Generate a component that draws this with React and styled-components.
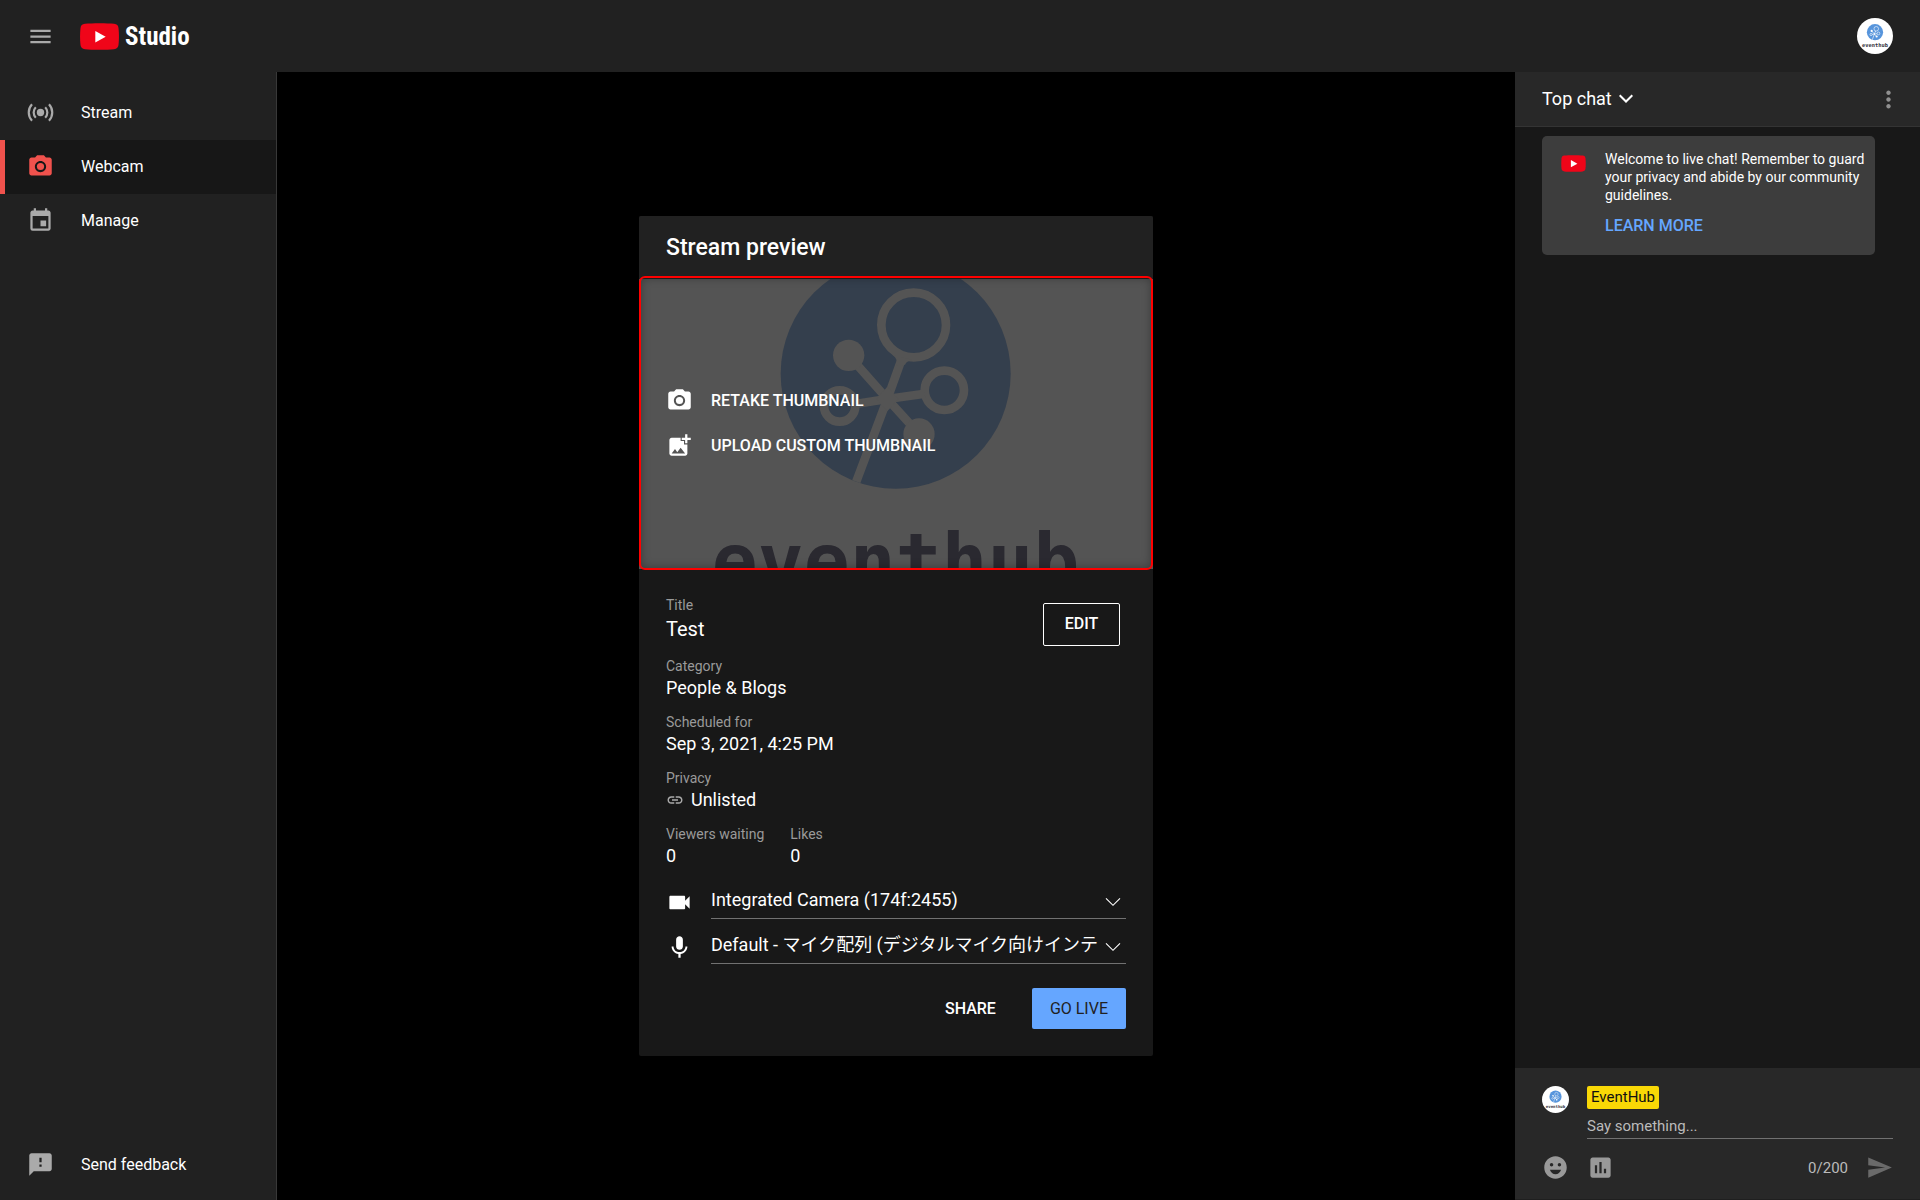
import React from "react";
import styled, { createGlobalStyle } from "styled-components";
import {
  MdMenu,
  MdPhotoCamera,
  MdEvent,
  MdFeedback,
  MdAddPhotoAlternate,
  MdVideocam,
  MdMic,
  MdLink,
  MdMoreVert,
  MdSend,
  MdEmojiEmotions,
  MdPoll,
} from "react-icons/md";

const GlobalStyle = createGlobalStyle`
  *, *::before, *::after { box-sizing: border-box; }
  body {
    margin: 0;
    background: #000;
    color: #fff;
    font-family: Roboto, "Noto Sans CJK JP", sans-serif;
    font-size: 16px;
  }
  button, input, select { font: inherit; color: inherit; }
  button { background: none; border: 0; padding: 0; cursor: pointer; }
  svg { display: block; flex: none; }
  p, h1, h2, dl, dt, dd, ul { margin: 0; padding: 0; }
`;

const Page = styled.div`
  display: flex;
  flex-direction: column;
  min-height: 100vh;
`;

const TopBar = styled.header`
  display: flex;
  align-items: center;
  height: 72px;
  padding: 0 27px;
  background: #212121;
`;

const IconButton = styled.button`
  display: flex;
  align-items: center;
  justify-content: center;
  width: 27px;
  height: 27px;
  color: ${(p) => p.$color || "#aaa"};
`;

const Brand = styled.a`
  display: flex;
  align-items: center;
  gap: 6px;
  margin-left: 26px;
  margin-right: auto;
  color: #fff;
  text-decoration: none;
`;

const BrandName = styled.span`
  padding-top: 2px;
  font-family: "Liberation Sans Narrow", "Roboto Condensed", Roboto, sans-serif;
  font-size: 25px;
  font-weight: 700;
  line-height: 28px;
`;

const AvatarFrame = styled.span`
  display: block;
  flex: none;
  width: ${(p) => p.$size}px;
  height: ${(p) => p.$size}px;
  border-radius: 50%;
  overflow: hidden;
  background: #fff;
`;

const Body = styled.div`
  display: flex;
  flex: 1;
`;

const Sidebar = styled.nav`
  display: flex;
  flex-direction: column;
  justify-content: space-between;
  flex: none;
  width: 277px;
  padding: 14px 0 8px;
  background: #212121;
  border-right: 1px solid #383838;
`;

const NavList = styled.ul`
  list-style: none;
`;

const NavLink = styled.a`
  display: flex;
  align-items: center;
  gap: 27px;
  height: 54px;
  padding: 0 0 2px 22px;
  border-left: 5px solid ${(p) => (p.$active ? "#f0524d" : "transparent")};
  background: ${(p) => (p.$active ? "#171717" : "transparent")};
  color: #fff;
  text-decoration: none;

  svg {
    color: ${(p) => (p.$active ? "#f0524d" : "#aaa")};
  }
`;

const Stage = styled.main`
  display: flex;
  flex: 1;
  align-items: center;
  justify-content: center;
  background: #000;
`;

const Card = styled.section`
  width: 514px;
  border-radius: 2px;
  overflow: hidden;
  background: #181818;
`;

const CardTitle = styled.h1`
  height: 63px;
  padding: 0 27px;
  background: #212121;
  font-size: 23px;
  font-weight: 500;
  line-height: 64px;
`;

const Thumbnail = styled.div`
  position: relative;
  display: flex;
  flex-direction: column;
  justify-content: center;
  height: 290px;
  padding-bottom: 2px;
  background: #545454;
`;

const ThumbnailArt = styled.svg`
  position: absolute;
  inset: 0;
  width: 100%;
  height: 100%;
`;

const Highlight = styled.div`
  position: absolute;
  inset: -3px 0 -1px;
  border: 2px solid #f00;
  border-radius: 6px;
  box-shadow: inset 0 0 10px rgba(0, 0, 0, 0.3);
  pointer-events: none;
`;

const ThumbnailAction = styled.button`
  position: relative;
  display: flex;
  align-items: center;
  gap: 18px;
  height: 45px;
  padding: 0 27px;
  font-weight: 500;
`;

const Details = styled.div`
  padding: 27px;
`;

const Summary = styled.div`
  display: flex;
  justify-content: space-between;
  align-items: flex-start;
`;

const Fields = styled.dl`
  display: flex;
  flex-direction: column;
  gap: 13px;
`;

const Stats = styled.div`
  display: flex;
  gap: 26px;
`;

const Label = styled.dt`
  color: #9a9a9a;
  font-size: 14px;
  line-height: 18px;
`;

const Value = styled.dd`
  display: flex;
  align-items: center;
  gap: 7px;
  font-size: ${(p) => (p.$large ? 20 : 18)}px;
  line-height: ${(p) => (p.$large ? 30 : 25)}px;

  svg {
    color: #aaa;
  }
`;

const EditButton = styled.button`
  width: 77px;
  height: 43px;
  margin: 7px 6px 0 0;
  padding-bottom: 2px;
  border: 1px solid #fff;
  border-radius: 2px;
  font-weight: 500;
`;

const Devices = styled.div`
  display: flex;
  flex-direction: column;
  gap: 8px;
  margin-top: 14px;
`;

const DeviceRow = styled.label`
  display: flex;
  align-items: center;
  gap: 18px;
  height: 37px;

  > svg {
    margin-top: 4px;
  }
`;

const SelectBox = styled.span`
  position: relative;
  flex: 1;
  min-width: 0;
  border-bottom: 1px solid #717171;

  svg {
    position: absolute;
    right: 5px;
    top: 15px;
    pointer-events: none;
  }
`;

const DeviceSelect = styled.select`
  display: block;
  appearance: none;
  width: 100%;
  height: 36px;
  padding: 0 22px 0 0;
  border: 0;
  background: transparent;
  font-size: 18px;
  line-height: 36px;
`;

const Actions = styled.div`
  display: flex;
  justify-content: flex-end;
  gap: 18px;
  margin-top: 24px;
`;

const ActionButton = styled.button`
  height: 41px;
  padding: 0 18px;
  border-radius: 2px;
  background: ${(p) => (p.$primary ? "#65a6ff" : "transparent")};
  color: ${(p) => (p.$primary ? "#212121" : "#fff")};
  font-weight: ${(p) => (p.$primary ? 400 : 500)};
`;

const Chat = styled.aside`
  display: flex;
  flex-direction: column;
  flex: none;
  width: 405px;
  background: #181818;
`;

const ChatHeader = styled.div`
  display: flex;
  align-items: center;
  justify-content: space-between;
  height: 55px;
  padding: 0 18px 0 27px;
  background: #282828;
  border-bottom: 1px solid #343434;
`;

const ChatMode = styled.button`
  display: flex;
  align-items: center;
  gap: 7px;
  padding-bottom: 2px;
  font-size: 18px;
`;

const Notice = styled.div`
  display: flex;
  align-items: flex-start;
  gap: 19px;
  margin: 9px 45px auto 27px;
  padding: 14px 9px 17px 19px;
  border-radius: 5px;
  background: #3d3d3d;
  font-size: 14px;
  line-height: 18px;

  > svg {
    margin-top: 5px;
  }
`;

const NoticeLink = styled.a`
  display: block;
  margin-top: 10px;
  color: #65a6ff;
  font-size: 16px;
  font-weight: 500;
  line-height: 24px;
  text-decoration: none;
`;

const Composer = styled.form`
  padding: 18px 27px;
  background: #282828;
  border-bottom: 1px solid #1f1f1f;
`;

const ComposerTop = styled.div`
  display: flex;
  align-items: flex-start;
  gap: 18px;
`;

const ComposerField = styled.div`
  flex: 1;
  min-width: 0;
`;

const Author = styled.label`
  display: block;
  width: fit-content;
  padding: 0 4px;
  border-radius: 2px;
  background: #f9d806;
  color: #111;
  font-size: 15px;
  line-height: 23px;
`;

const MessageInput = styled.input`
  display: block;
  width: 100%;
  height: 22px;
  margin-top: 8px;
  padding: 0 0 3px;
  border: 0;
  border-bottom: 1px solid #717171;
  outline: 0;
  background: transparent;
  font-size: 15px;
  line-height: 18px;

  &::placeholder {
    color: #bbb;
    opacity: 1;
  }
`;

const ComposerTools = styled.div`
  display: flex;
  align-items: center;
  gap: 18px;
  margin-top: 15px;
`;

const Counter = styled.span`
  margin-left: auto;
  color: #bbb;
  font-size: 15px;
`;

const PlayBadge = ({ width, height }) => (
  <svg width={width} height={height} viewBox="0 0 39 27" aria-hidden="true">
    <path
      d="M5 .8C12 0 27 0 34 .8 37 1.200 38.200 2.600 38.500 5c.6 5 .6 12 0 17-.3 2.400-1.500 3.800-4.500 4.200-7 .8-22 .8-29 0C2 25.800.8 24.400.5 22c-.6-5-.6-12 0-17C.8 2.600 2 1.200 5 .8z"
      fill="#f00519"
    />
    <path d="M15.300 8v11.400l10.400-5.700z" fill="#fff" />
  </svg>
);

const Chevron = ({ width, height, stroke }) => (
  <svg width={width} height={height} viewBox="0 0 14 9" fill="none" aria-hidden="true">
    <path d="M.7 1.200 7 7.500l6.300-6.300" stroke="#fff" strokeWidth={stroke} />
  </svg>
);

const StreamIcon = () => (
  <svg width="27" height="27" viewBox="0 0 27 27" fill="none" aria-hidden="true">
    <circle cx="13.500" cy="13.500" r="3.700" fill="currentColor" />
    <g stroke="currentColor" strokeWidth="2.200">
      <path d="M8.800 8.300a7.400 7.400 0 0 0 0 10.400" />
      <path d="M18.200 8.300a7.400 7.400 0 0 1 0 10.400" />
      <path d="M5 5.300a12 12 0 0 0 0 16.400" />
      <path d="M22 5.300a12 12 0 0 1 0 16.400" />
    </g>
  </svg>
);

/* Company mark: circular network emblem above the lowercase word. */
const EventMark = ({ blue, line, ink }) => (
  <>
    <clipPath id="emblem">
      <circle cx="798" cy="491" r="345" />
    </clipPath>
    <circle cx="798" cy="491" r="345" fill={blue} />
    <g clipPath="url(#emblem)" fill="none" stroke={line} strokeWidth="26">
      <circle cx="852" cy="345" r="97" />
      <circle cx="944" cy="541" r="59" />
      <circle cx="630" cy="588" r="47" />
      <path d="M817 445 773 567 674 830" />
      <path d="M885 551 773 567 677 582" />
      <path d="M657 436 773 567 862 665" />
      <circle cx="657" cy="436" r="47" fill={line} stroke="none" />
      <circle cx="868" cy="672" r="47" fill={line} stroke="none" />
      <path d="M773 530 806 567 773 604 740 567z" fill={line} stroke="none" />
      <path d="M788 434Q806 446 800 468L826 464Q832 452 848 450z" fill={line} stroke="none" />
    </g>
    <text
      x="798"
      y="1134"
      fill={ink}
      fontFamily="DejaVu Sans Mono, monospace"
      fontSize="229"
      fontWeight="700"
      textAnchor="middle"
    >
      eventhub
    </text>
  </>
);

const Avatar = ({ size }) => (
  <AvatarFrame $size={size}>
    <svg width={size} height={size} viewBox="33 -114 1530 1530" role="img" aria-label="EventHub">
      <EventMark blue="#5795dc" line="#fff" ink="#33333d" />
    </svg>
  </AvatarFrame>
);

const navItems = [
  { label: "Stream", icon: <StreamIcon /> },
  { label: "Webcam", icon: <MdPhotoCamera size={27} />, active: true },
  { label: "Manage", icon: <MdEvent size={27} /> },
];

const devices = [
  { id: "camera", icon: <MdVideocam size={27} />, name: "Integrated Camera (174f:2455)" },
  { id: "microphone", icon: <MdMic size={27} />, name: "Default - マイク配列 (デジタルマイク向けインテ" },
];

const Field = ({ label, large, children }) => (
  <div>
    <Label>{label}</Label>
    <Value $large={large}>{children}</Value>
  </div>
);

export default function App() {
  return (
    <Page>
      <GlobalStyle />
      <TopBar>
        <IconButton aria-label="Menu">
          <MdMenu size={27} />
        </IconButton>
        <Brand href="#">
          <PlayBadge width={39} height={27} />
          <BrandName>Studio</BrandName>
        </Brand>
        <Avatar size={36} />
      </TopBar>

      <Body>
        <Sidebar>
          <NavList>
            {navItems.map((item) => (
              <li key={item.label}>
                <NavLink href="#" $active={item.active}>
                  {item.icon}
                  {item.label}
                </NavLink>
              </li>
            ))}
          </NavList>
          <NavLink href="#">
            <MdFeedback size={27} />
            Send feedback
          </NavLink>
        </Sidebar>

        <Stage>
          <Card>
            <CardTitle>Stream preview</CardTitle>
            <Thumbnail>
              <ThumbnailArt viewBox="28 207 1542 870" aria-hidden="true">
                <EventMark blue="#343f4d" line="#545454" ink="#2a2930" />
              </ThumbnailArt>
              <Highlight />
              <ThumbnailAction>
                <MdPhotoCamera size={27} />
                RETAKE THUMBNAIL
              </ThumbnailAction>
              <ThumbnailAction>
                <MdAddPhotoAlternate size={27} />
                UPLOAD CUSTOM THUMBNAIL
              </ThumbnailAction>
            </Thumbnail>

            <Details>
              <Summary>
                <Fields>
                  <Field label="Title" large>
                    Test
                  </Field>
                  <Field label="Category">People &amp; Blogs</Field>
                  <Field label="Scheduled for">Sep 3, 2021, 4:25 PM</Field>
                  <Field label="Privacy">
                    <MdLink size={18} />
                    Unlisted
                  </Field>
                  <Stats>
                    <Field label="Viewers waiting">0</Field>
                    <Field label="Likes">0</Field>
                  </Stats>
                </Fields>
                <EditButton>EDIT</EditButton>
              </Summary>

              <Devices>
                {devices.map((device) => (
                  <DeviceRow key={device.id} htmlFor={device.id}>
                    {device.icon}
                    <SelectBox>
                      <DeviceSelect id={device.id} aria-label={device.id}>
                        <option>{device.name}</option>
                      </DeviceSelect>
                      <Chevron width={16} height={10} stroke={1} />
                    </SelectBox>
                  </DeviceRow>
                ))}
              </Devices>

              <Actions>
                <ActionButton>SHARE</ActionButton>
                <ActionButton $primary>GO LIVE</ActionButton>
              </Actions>
            </Details>
          </Card>
        </Stage>

        <Chat>
          <ChatHeader>
            <ChatMode>
              Top chat
              <Chevron width={14} height={9} stroke={2} />
            </ChatMode>
            <IconButton aria-label="More options" $color="#909090">
              <MdMoreVert size={27} />
            </IconButton>
          </ChatHeader>

          <Notice>
            <PlayBadge width={25} height={17} />
            <div>
              <p>
                Welcome to live chat! Remember to guard your privacy and abide by our community
                guidelines.
              </p>
              <NoticeLink href="#">LEARN MORE</NoticeLink>
            </div>
          </Notice>

          <Composer>
            <ComposerTop>
              <Avatar size={27} />
              <ComposerField>
                <Author htmlFor="message">EventHub</Author>
                <MessageInput id="message" type="text" placeholder="Say something..." />
              </ComposerField>
            </ComposerTop>
            <ComposerTools>
              <IconButton type="button" aria-label="Emoji" $color="#999">
                <MdEmojiEmotions size={27} />
              </IconButton>
              <IconButton type="button" aria-label="Poll" $color="#999">
                <MdPoll size={27} />
              </IconButton>
              <Counter>0/200</Counter>
              <IconButton type="button" aria-label="Send" $color="#6a6a6a">
                <MdSend size={27} />
              </IconButton>
            </ComposerTools>
          </Composer>
        </Chat>
      </Body>
    </Page>
  );
}
